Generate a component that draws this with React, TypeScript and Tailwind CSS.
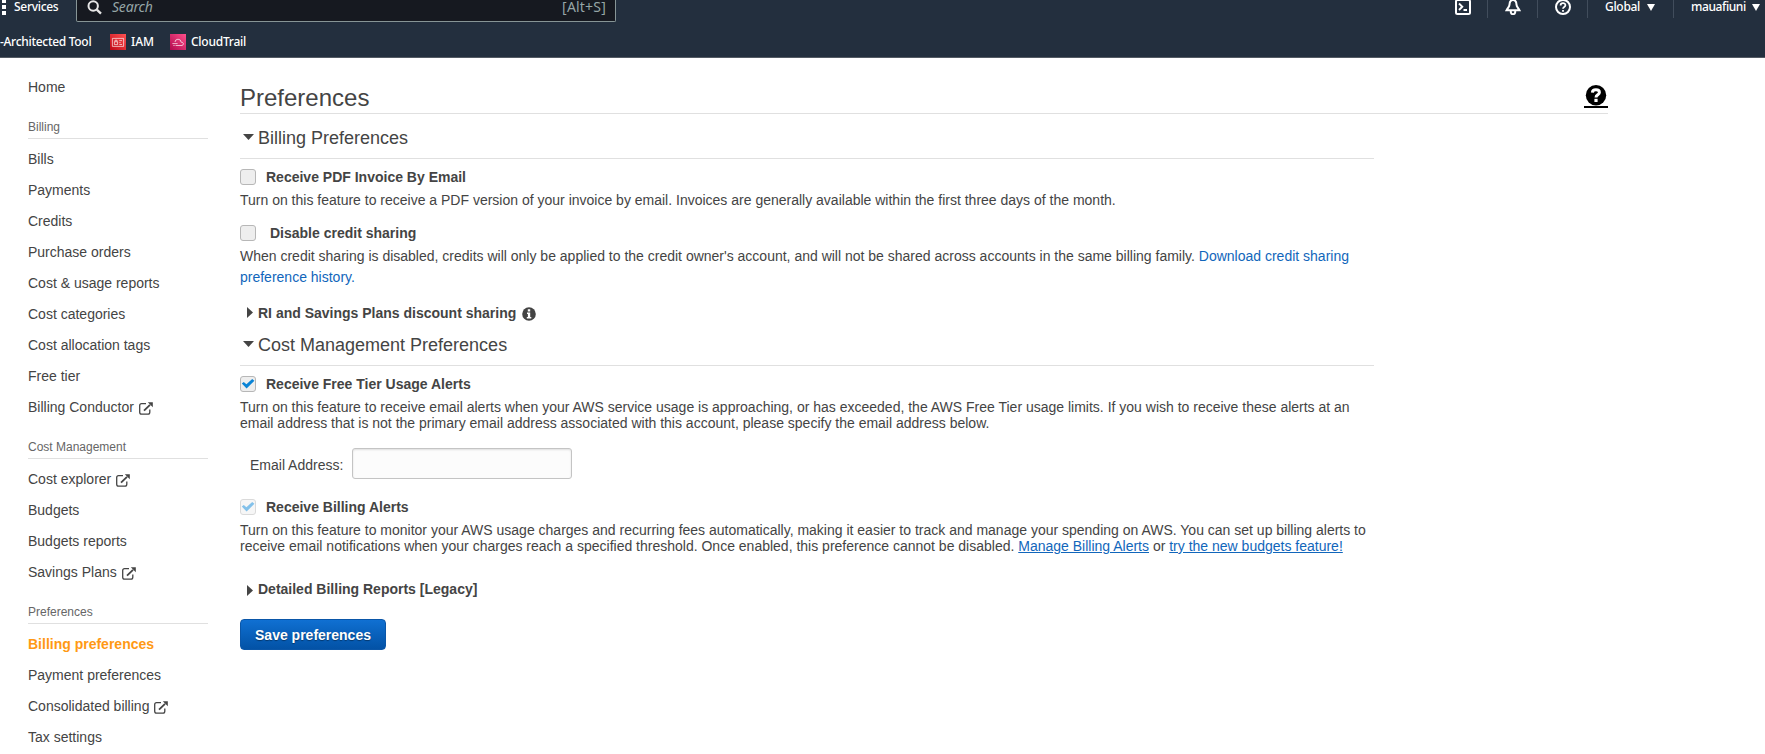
import type { ReactNode } from "react";

type Item = { label: string; external?: boolean; active?: boolean };

const sections: { title: string; items: Item[] }[] = [
  {
    title: "Billing",
    items: [
      { label: "Bills" },
      { label: "Payments" },
      { label: "Credits" },
      { label: "Purchase orders" },
      { label: "Cost & usage reports" },
      { label: "Cost categories" },
      { label: "Cost allocation tags" },
      { label: "Free tier" },
      { label: "Billing Conductor", external: true },
    ],
  },
  {
    title: "Cost Management",
    items: [
      { label: "Cost explorer", external: true },
      { label: "Budgets" },
      { label: "Budgets reports" },
      { label: "Savings Plans", external: true },
    ],
  },
  {
    title: "Preferences",
    items: [
      { label: "Billing preferences", active: true },
      { label: "Payment preferences" },
      { label: "Consolidated billing", external: true },
      { label: "Tax settings" },
    ],
  },
];

function ExternalIcon() {
  return (
    <svg width="14" height="13" viewBox="0 0 14 13" className="mt-[2px] ml-[5px] shrink-0" fill="none" stroke="#444" strokeWidth="1.3">
      <path d="M7 1.7H2.6Q.7 1.7 .7 3.6V10.2Q.7 12.1 2.6 12.1H8.9Q10.8 12.1 10.8 10.2V7.5" />
      <path d="M5 8.6L11 2.8" strokeWidth="1.8" />
      <path d="M8.8.2H13.8V5.2Z" fill="#444" stroke="none" />
    </svg>
  );
}

function Checkbox({ checked, faded }: { checked?: boolean; faded?: boolean }) {
  return (
    <span className={`flex h-4 w-4 shrink-0 items-center justify-center rounded-[3px] border border-[#b7b7b7] bg-[#eeeeee] ${faded ? "opacity-50" : ""}`}>
      {checked && (
        <svg width="14" height="14" viewBox="0 0 14 14" fill="#0a84d6">
          <path d="M.8 6.6L2.8 5L5.4 7.2L11.2 2L13.4 3.8L5.6 11.6Z" />
        </svg>
      )}
    </span>
  );
}

function Down() {
  return (
    <svg width="11" height="6" viewBox="0 0 11 6" className="mt-[6px] mr-1 ml-[3px] shrink-0">
      <path d="M0 0H11L5.5 6Z" fill="#444" />
    </svg>
  );
}

function Right({ low }: { low?: boolean }) {
  return (
    <svg width="6" height="11" viewBox="0 0 6 11" className={`mr-[5px] ml-[7px] shrink-0 ${low ? "mt-1" : "mt-[2px]"}`}>
      <path d="M0 0V11L6 5.5Z" fill="#444" />
    </svg>
  );
}

function Heading({ children }: { children: ReactNode }) {
  return (
    <h2 className="mt-[14px] flex w-[1134px] border-b border-[#e0e0e0] pb-[10px] text-[18px] leading-5">
      <Down />
      {children}
    </h2>
  );
}

function Header() {
  return (
    <header className="h-[58px] border-b border-[#545b64] bg-[#232f3e] font-['Noto_Sans','Open_Sans',sans-serif] text-[12px] font-medium text-white">
      <div className="flex h-[22px]">
        <div className="flex h-[14px] w-[76px] shrink-0 items-center">
          <svg width="6" height="15" viewBox="0 0 6 15" className="mr-2 shrink-0" fill="#fff">
            <rect x="2" y="0" width="4" height="3" />
            <rect x="2" y="5" width="4" height="4" />
            <rect x="2" y="11" width="4" height="4" />
          </svg>
          <span className="leading-[14px] tracking-[-0.3px]">Services</span>
        </div>
        <div className="h-[22px] w-[540px] rounded-b-[2px] border border-t-0 border-[#879596] bg-[#161920]">
          <div className="flex h-[14px] items-center pr-[9px] pl-[10px] text-[14px] leading-[14px] font-normal text-[#95a5a6]">
            <svg width="15" height="15" viewBox="0 0 15 15" className="mr-[10px] shrink-0" fill="none" stroke="#e6e6e6" strokeWidth="2">
              <circle cx="6.2" cy="6" r="4.7" />
              <path d="M9.8 9.6L14 13.6" strokeWidth="2.4" />
            </svg>
            <span className="italic tracking-[-0.2px]">Search</span>
            <span className="ml-auto tracking-[0.2px]">[Alt+S]</span>
          </div>
        </div>
        <div className="ml-auto flex h-[18px]">
          <div className="flex h-[14px] w-[32px] items-center">
            <svg width="16" height="16" viewBox="0 0 16 16" fill="none" stroke="#fff" strokeWidth="2">
              <rect x="1" y="1" width="14" height="14" rx="1.5" />
              <path d="M4 4.5L7.3 7.7L4 11M8.5 11H12" strokeWidth="1.9" />
            </svg>
          </div>
          <div className="flex h-[18px] w-[50px] justify-center border-l border-[#414d5c]">
            <svg width="16" height="16" viewBox="0 0 16 16" className="-mt-px" fill="none" stroke="#fff" strokeWidth="2">
              <path d="M8 1C5.4 1 4.6 3 4.5 5.6C4.4 7.8 3 8.6 1.6 11.2H14.4C13 8.6 11.6 7.8 11.5 5.6C11.4 3 10.6 1 8 1Z" />
              <path d="M5.8 12V13.2Q6.2 15.2 8 15.2T10.2 13.2V12" />
            </svg>
          </div>
          <div className="flex h-[18px] w-[50px] justify-center border-l border-[#414d5c]">
            <svg width="16" height="16" viewBox="0 0 16 16" className="-mt-px" fill="none" stroke="#fff" strokeWidth="2">
              <circle cx="8" cy="8" r="7" />
              <path d="M5.6 6.4C5.6 3.4 10.4 3.4 10.4 6.2C10.4 8 8 7.8 8 9.8M8 11V12.8" strokeWidth="1.8" />
            </svg>
          </div>
          <div className="flex h-[18px] w-[86px] border-l border-[#414d5c] pl-[17px]">
            <span className="w-[36px] leading-[14px] tracking-[-0.3px]">Global</span>
            <svg width="8" height="7" viewBox="0 0 8 7" className="mt-1 ml-[6px]">
              <path d="M0 0H8L4 7Z" fill="#fff" />
            </svg>
          </div>
          <div className="flex h-[18px] w-[92px] border-l border-[#414d5c] pl-[17px]">
            <span className="w-[56px] leading-[14px] tracking-[-0.4px]">mauafiuni</span>
            <svg width="8" height="7" viewBox="0 0 8 7" className="mt-1 ml-[5px]">
              <path d="M0 0H8L4 7Z" fill="#fff" />
            </svg>
          </div>
        </div>
      </div>
      <div className="mt-3 flex h-4 items-center leading-4">
        <span className="w-[110px] whitespace-nowrap tracking-[-0.3px]">-Architected Tool</span>
        <svg width="16" height="16" viewBox="0 0 16 16" className="mr-[5px] shrink-0">
          <defs>
            <linearGradient id="iam" x1="0" y1="1" x2="1" y2="0">
              <stop offset="0" stopColor="#bd0816" />
              <stop offset="1" stopColor="#ff5252" />
            </linearGradient>
          </defs>
          <rect width="16" height="16" fill="url(#iam)" />
          <g fill="none" stroke="#fff" strokeOpacity=".8" strokeWidth=".8">
            <path d="M2.4 4.4H13.6V12.4H2.4ZM4.4 7.8H7.6V10.6H4.4ZM5 7.8V6.2H7V7.8M9.3 6.6H12M9.3 8.6H10.6M9.3 10.5H12" />
          </g>
        </svg>
        <span className="w-[39px]">IAM</span>
        <svg width="16" height="16" viewBox="0 0 16 16" className="mr-[5px] shrink-0">
          <defs>
            <linearGradient id="trail" x1="0" y1="1" x2="1" y2="0">
              <stop offset="0" stopColor="#b0084d" />
              <stop offset="1" stopColor="#ff4f8b" />
            </linearGradient>
          </defs>
          <rect width="16" height="16" fill="url(#trail)" />
          <path d="M5.6 11.5H12Q13.6 11 13.3 9.4Q12.8 8 11.2 8.2Q10.8 5.2 8 5.2Q5.2 5.3 5 8M2.4 9.6H7.6M3.4 11.5H4.6" fill="none" stroke="#fff" strokeOpacity=".75" strokeWidth=".9" />
        </svg>
        <span className="tracking-[-0.25px]">CloudTrail</span>
      </div>
    </header>
  );
}

export default function App() {
  return (
    <div className="h-[754px] w-[1765px] overflow-hidden bg-white font-['Liberation_Sans',Arial,sans-serif] text-[14px] text-[#444444]">
      <Header />
      <div className="flex">
        <nav className="w-[240px] shrink-0 pt-[14px] pl-7">
          <div className="h-[31px] leading-[31px]">Home</div>
          {sections.map((s) => (
            <section key={s.title}>
              <h3 className="mt-[14px] mb-[5px] w-[180px] border-b border-[#e0e0e0] pb-px text-[12px] leading-5 text-[#666]">{s.title}</h3>
              {s.items.map((it) => (
                <a key={it.label} className={`flex h-[31px] items-center leading-[31px] ${it.active ? "font-bold text-[#ff9914]" : ""}`}>
                  {it.label}
                  {it.external && <ExternalIcon />}
                </a>
              ))}
            </section>
          ))}
        </nav>
        <main className="w-[1368px] pt-[26px]">
          <div className="flex h-[30px] justify-between border-b border-[#e0e0e0]">
            <h1 className="text-[24px] leading-7">Preferences</h1>
            <a className="flex h-6 w-6 flex-col items-center border-b-2 border-black">
              <svg width="22" height="21" viewBox="0 0 22 21" className="mt-px">
                <circle cx="11" cy="10.3" r="10.2" fill="#000" />
                <path d="M7.4 7.6C7.6 3.8 14.4 4 14.4 7.5C14.4 9.9 11 9.8 11 12.5" fill="none" stroke="#fff" strokeWidth="3" />
                <rect x="9.4" y="13.8" width="3.2" height="3.2" fill="#fff" />
              </svg>
            </a>
          </div>

          <Heading>Billing Preferences</Heading>
          <label className="mt-[10px] flex h-4 gap-[10px] font-bold leading-4">
            <Checkbox />
            Receive PDF Invoice By Email
          </label>
          <p className="mt-[7px] leading-4">
            Turn on this feature to receive a PDF version of your invoice by email. Invoices are generally available within the first three days of the month.
          </p>
          <label className="mt-[17px] flex h-4 gap-[14px] font-bold leading-4">
            <Checkbox />
            Disable credit sharing
          </label>
          <p className="mt-[5px] w-[1134px] leading-[21px]">
            When credit sharing is disabled, credits will only be applied to the credit owner's account, and will not be shared across accounts in the same billing family.{" "}
            <a className="text-[#1166bb]">
              Download credit sharing
              <br />
              preference history.
            </a>
          </p>
          <div className="mt-[17px] flex h-4 font-bold leading-4">
            <Right />
            RI and Savings Plans discount sharing
            <svg width="14" height="14" viewBox="0 0 14 14" className="mt-[2px] ml-[6px] shrink-0">
              <circle cx="7" cy="7" r="6.8" fill="#444" />
              <path d="M5.8 2.3H8.2V4.4H5.8ZM5 5.5H8.2V10H9.3V11.5H4.8V10H5.9V7H5Z" fill="#fff" />
            </svg>
          </div>

          <Heading>Cost Management Preferences</Heading>
          <label className="mt-[10px] flex h-4 gap-[10px] font-bold leading-4">
            <Checkbox checked />
            Receive Free Tier Usage Alerts
          </label>
          <p className="mt-[7px] leading-4">
            Turn on this feature to receive email alerts when your AWS service usage is approaching, or has exceeded, the AWS Free Tier usage limits. If you wish to receive these alerts at an
            <br />
            email address that is not the primary email address associated with this account, please specify the email address below.
          </p>
          <div className="mt-[17px] flex h-[31px] pl-[10px]">
            <span className="w-[102px] pt-[9px] leading-4">Email Address:</span>
            <input className="h-[31px] w-[220px] rounded-[3px] border border-[#c4c4c4] bg-[#fcfcfc] shadow-[inset_0_1px_2px_rgba(0,0,0,0.12)]" />
          </div>
          <label className="mt-5 flex h-4 gap-[10px] font-bold leading-4">
            <Checkbox checked faded />
            Receive Billing Alerts
          </label>
          <p className="mt-[7px] leading-4">
            Turn on this feature to monitor your AWS usage charges and recurring fees automatically, making it easier to track and manage your spending on AWS. You can set up billing alerts to
            <br />
            receive email notifications when your charges reach a specified threshold. Once enabled, this preference cannot be disabled.{" "}
            <a className="text-[#1166bb] underline">Manage Billing Alerts</a> or <a className="text-[#1166bb] underline">try the new budgets feature!</a>
          </p>
          <div className="mt-[27px] flex h-4 font-bold leading-4">
            <Right low />
            Detailed Billing Reports [Legacy]
          </div>
          <button className="mt-[22px] flex h-[31px] w-[146px] items-center justify-center rounded-[4px] border border-[#0a56a8] bg-linear-to-b from-[#1070d2] to-[#0352a6] text-[14px] font-bold leading-4 text-white [text-shadow:0_1px_1px_rgba(0,0,0,0.4)]">
            Save preferences
          </button>
        </main>
      </div>
    </div>
  );
}
